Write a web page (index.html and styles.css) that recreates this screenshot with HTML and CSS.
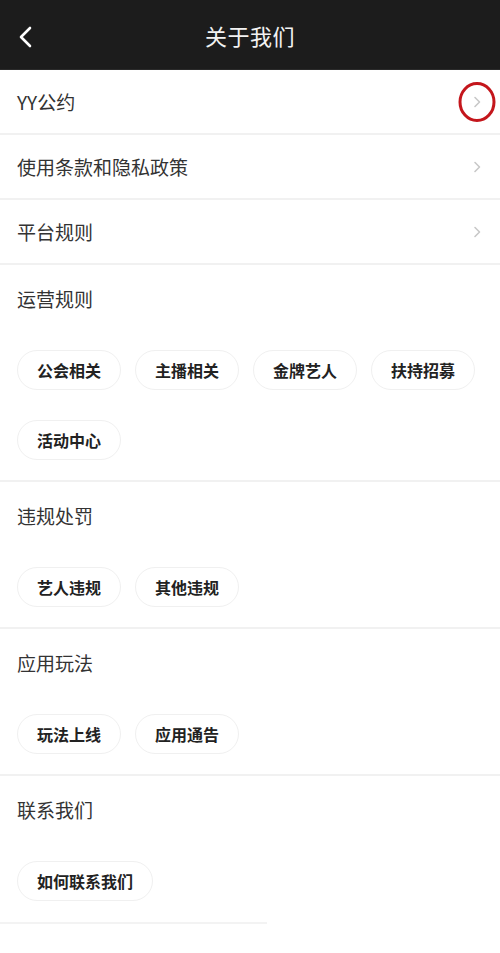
FILE: index.html
```html
<!DOCTYPE html>
<html lang="zh">
<head>
<meta charset="utf-8">
<title>关于我们</title>
<link rel="stylesheet" href="styles.css">
</head>
<body>
<header class="topbar">
  <svg class="back" width="16" height="22" viewBox="0 0 16 22"><path d="M13 2 L4 11 L13 20" fill="none" stroke="#fff" stroke-width="2.6" stroke-linecap="round" stroke-linejoin="round"/></svg>
  <h1 class="title">关于我们</h1>
</header>
<main>
  <div class="row">
    <span class="row-label">YY公约</span>
    <span class="chev-wrap">
      <svg class="chev" width="8" height="12" viewBox="0 0 8 12"><path d="M2 1.5 L6.5 6 L2 10.5" fill="none" stroke="#c8c8c8" stroke-width="1.6" stroke-linecap="round" stroke-linejoin="round"/></svg>
      <svg class="mark" width="40" height="42" viewBox="0 0 40 42"><ellipse cx="20" cy="21" rx="17" ry="18.5" fill="none" stroke="#c4161c" stroke-width="3"/></svg>
    </span>
  </div>
  <div class="row">
    <span class="row-label">使用条款和隐私政策</span>
    <span class="chev-wrap"><svg class="chev" width="8" height="12" viewBox="0 0 8 12"><path d="M2 1.5 L6.5 6 L2 10.5" fill="none" stroke="#c8c8c8" stroke-width="1.6" stroke-linecap="round" stroke-linejoin="round"/></svg></span>
  </div>
  <div class="row">
    <span class="row-label">平台规则</span>
    <span class="chev-wrap"><svg class="chev" width="8" height="12" viewBox="0 0 8 12"><path d="M2 1.5 L6.5 6 L2 10.5" fill="none" stroke="#c8c8c8" stroke-width="1.6" stroke-linecap="round" stroke-linejoin="round"/></svg></span>
  </div>

  <section class="group">
    <h2 class="group-title">运营规则</h2>
    <div class="chips">
      <span class="chip">公会相关</span>
      <span class="chip">主播相关</span>
      <span class="chip">金牌艺人</span>
      <span class="chip">扶持招募</span>
      <span class="chip">活动中心</span>
    </div>
  </section>
  <section class="group">
    <h2 class="group-title">违规处罚</h2>
    <div class="chips">
      <span class="chip">艺人违规</span>
      <span class="chip">其他违规</span>
    </div>
  </section>
  <section class="group">
    <h2 class="group-title">应用玩法</h2>
    <div class="chips">
      <span class="chip">玩法上线</span>
      <span class="chip">应用通告</span>
    </div>
  </section>
  <section class="group last">
    <h2 class="group-title">联系我们</h2>
    <div class="chips">
      <span class="chip">如何联系我们</span>
    </div>
  </section>
  <div class="tail-line"></div>
</main>
</body>
</html>
```
FILE: styles.css
```css
* { box-sizing: border-box; }
html, body { margin: 0; padding: 0; background: #fff; }
body {
  font-family: "Noto Sans CJK SC", "Noto Sans", "Liberation Sans", sans-serif;
  color: #333;
}
.topbar {
  height: 70px;
  background: #1c1c1c;
  border-bottom: 1px solid #2a2a2a;
  display: flex;
  align-items: center;
  justify-content: center;
  position: relative;
}
.back {
  position: absolute;
  left: 17px;
  top: 26px;
}
.title {
  margin: 0;
  font-size: 22px;
  font-weight: 400;
  color: #f2f2f2;
  letter-spacing: 0.5px;
}
.row {
  height: 65px;
  display: flex;
  align-items: center;
  justify-content: space-between;
  padding: 0 17px 0 17px;
  border-bottom: 2px solid #f1f1f1;
}
.row-label {
  font-size: 19px;
  color: #333;
}
.chev-wrap {
  position: relative;
  width: 20px;
  height: 20px;
  display: flex;
  align-items: center;
  justify-content: center;
  margin-right: -4px;
}
.mark {
  position: absolute;
  left: -10px;
  top: -11px;
}
.group {
  padding: 21px 0 20px 17px;
  border-bottom: 2px solid #f1f1f1;
}
.group.last { border-bottom: none; padding-bottom: 21px; }
.group-title {
  margin: 0;
  font-size: 19px;
  font-weight: 400;
  line-height: 26px;
  color: #333;
}
.chips {
  margin-top: 38px;
  display: flex;
  flex-wrap: wrap;
  column-gap: 14px;
  row-gap: 30px;
}
.chip {
  height: 40px;
  padding: 0 19px;
  display: inline-flex;
  align-items: center;
  border: 1px solid #f0f0f0;
  border-radius: 20px;
  font-size: 16px;
  font-weight: 700;
  color: #222;
  background: #fff;
}
.tail-line {
  width: 267px;
  height: 2px;
  background: #f3f3f3;
}
```
